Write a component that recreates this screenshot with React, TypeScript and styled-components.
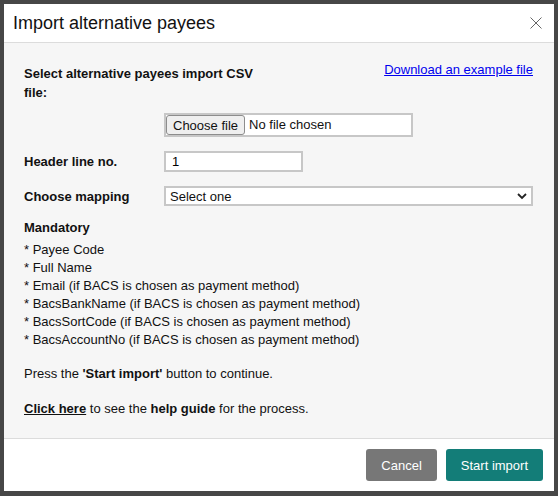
import styled, { createGlobalStyle } from "styled-components";

const GlobalStyle = createGlobalStyle`
  html, body {
    margin: 0;
    padding: 0;
    background: #474747;
    font-family: "Liberation Sans", Arial, sans-serif;
  }
`;

const Backdrop = styled.div`
  width: 558px;
  height: 496px;
  padding: 4px;
  box-sizing: border-box;
  background: #474747;
`;

const Modal = styled.div`
  width: 550px;
  height: 487px;
  background: #fff;
  display: flex;
  flex-direction: column;
  color: #111;
`;

const Header = styled.div`
  height: 38px;
  display: flex;
  align-items: center;
  justify-content: space-between;
  padding: 0 11px 0 9px;
  border-bottom: 1px solid #dcdcdc;
`;

const Title = styled.h1`
  margin: 0;
  font-size: 18px;
  font-weight: 400;
  color: #111;
`;

const Close = styled.button`
  border: 0;
  background: none;
  padding: 0;
  width: 14px;
  height: 14px;
  display: flex;
  align-items: center;
  justify-content: center;
  cursor: pointer;
`;

const Body = styled.div`
  flex: 1;
  background: #f6f6f6;
  padding: 21px 21px 0 20px;
  font-size: 13px;
  line-height: 18px;
  border-bottom: 1px solid #dcdcdc;
`;

const TopRow = styled.div`
  display: flex;
  justify-content: space-between;
  align-items: flex-start;
`;

const Label = styled.label`
  font-weight: 700;
  line-height: 19px;
`;

const FileLabel = styled(Label)`
  width: 50%;
`;

const Link = styled.a`
  color: #0000ee;
  text-decoration: underline;
  line-height: 16px;
  margin-top: -2px;
`;

const FormGrid = styled.div`
  display: grid;
  grid-template-columns: 140px 1fr;
  align-items: center;
  row-gap: 14px;
  margin-top: 11px;
`;

const FileBox = styled.div`
  grid-column: 2;
  width: 249px;
  height: 24px;
  box-sizing: border-box;
  border: 2px solid #c7c7c7;
  background: #fff;
  display: flex;
  align-items: center;
  gap: 4px;
  font-size: 13px;
`;

const FileButton = styled.button`
  height: 20px;
  margin-left: 0;
  padding: 0 6px;
  border: 1px solid #8d8d8d;
  border-radius: 3px;
  background: #efefef;
  font-family: inherit;
  font-size: 13px;
  color: #111;
`;

const TextInput = styled.input`
  width: 139px;
  height: 21px;
  box-sizing: border-box;
  border: 2px solid #c7c7c7;
  padding: 0 6px;
  font-family: inherit;
  font-size: 13px;
  background: #fff;
  outline: none;
`;

const SelectWrap = styled.div`
  position: relative;
  width: 369px;
`;

const Select = styled.select`
  width: 100%;
  height: 20px;
  box-sizing: border-box;
  border: 2px solid #c7c7c7;
  padding: 0 4px;
  appearance: none;
  background: #fff;
  font-family: inherit;
  font-size: 13px;
  color: #111;
  border-radius: 0;
`;

const Chevron = styled.svg`
  position: absolute;
  right: 6px;
  top: 6px;
  pointer-events: none;
`;

const Heading = styled.div`
  font-weight: 700;
  margin-top: 13px;
  margin-bottom: 4px;
`;

const List = styled.ul`
  list-style: none;
  margin: 0;
  padding: 0;
`;

const Paragraph = styled.p<{ $gap: number }>`
  margin: ${(p) => p.$gap}px 0 0;
`;

const HelpLink = styled.a`
  color: #111;
  font-weight: 700;
  text-decoration: underline;
`;

const Footer = styled.div`
  height: 52px;
  display: flex;
  justify-content: flex-end;
  align-items: center;
  gap: 9px;
  padding-right: 11px;
`;

const Button = styled.button<{ $primary?: boolean }>`
  height: 32px;
  padding: 0 15px;
  border: 0;
  border-radius: 3px;
  background: ${(p) => (p.$primary ? "#137d78" : "#777777")};
  color: #fff;
  font-family: inherit;
  font-size: 13px;
  cursor: pointer;
`;

const fields = [
  "Payee Code",
  "Full Name",
  "Email (if BACS is chosen as payment method)",
  "BacsBankName (if BACS is chosen as payment method)",
  "BacsSortCode (if BACS is chosen as payment method)",
  "BacsAccountNo (if BACS is chosen as payment method)",
];

export default function App() {
  return (
    <>
      <GlobalStyle />
      <Backdrop>
        <Modal>
          <Header>
            <Title>Import alternative payees</Title>
            <Close aria-label="Close">
              <svg width="12" height="12" viewBox="0 0 12 12">
                <path d="M0.5 0.5L11.5 11.5M11.5 0.5L0.5 11.5" stroke="#666" strokeWidth="1" />
              </svg>
            </Close>
          </Header>
          <Body>
            <TopRow>
              <FileLabel>Select alternative payees import CSV file:</FileLabel>
              <Link href="#">Download an example file</Link>
            </TopRow>
            <FormGrid>
              <FileBox>
                <FileButton>Choose file</FileButton>
                <span>No file chosen</span>
              </FileBox>
              <Label>Header line no.</Label>
              <TextInput defaultValue="1" />
              <Label>Choose mapping</Label>
              <SelectWrap>
                <Select defaultValue="">
                  <option value="">Select one</option>
                </Select>
                <Chevron width="10" height="8" viewBox="0 0 10 8">
                  <path d="M1 2L5 6L9 2" fill="none" stroke="#222" strokeWidth="1.8" />
                </Chevron>
              </SelectWrap>
            </FormGrid>
            <Heading>Mandatory</Heading>
            <List>
              {fields.map((f) => (
                <li key={f}>* {f}</li>
              ))}
            </List>
            <Paragraph $gap={16}>
              Press the <b>'Start import'</b> button to continue.
            </Paragraph>
            <Paragraph $gap={17}>
              <HelpLink href="#">Click here</HelpLink> to see the <b>help guide</b> for the process.
            </Paragraph>
          </Body>
          <Footer>
            <Button>Cancel</Button>
            <Button $primary>Start import</Button>
          </Footer>
        </Modal>
      </Backdrop>
    </>
  );
}
